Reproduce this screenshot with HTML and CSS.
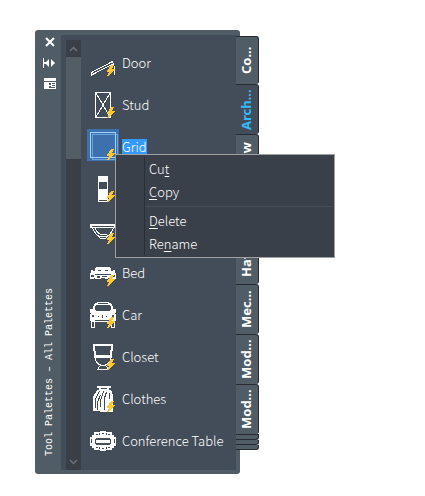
FILE: index.html
```html
<!DOCTYPE html>
<html lang="en">
<head>
    <meta charset="UTF-8">
    <meta name="viewport" content="width=device-width, initial-scale=1.0">
    <title>Tool Palettes</title>
    <link rel="stylesheet" href="styles.css">
</head>
<body>
    <!-- Shared flash mark for every tool -->
    <svg class="defs" aria-hidden="true">
        <symbol id="bolt" viewBox="0 0 8 11">
            <path fill="#ffc832" d="M4 0h3L5 4h3L7 6 1 11H0l2-4H0V6z"/>
        </symbol>
    </svg>

    <main class="window">
        <section class="palette">
            <header class="titlebar">
                <div class="controls">
                    <button class="control" aria-label="Close">
                        <svg width="14" height="12" viewBox="0 0 14 12"><path d="M3 2l8 8M11 2l-8 8" stroke="#fff" stroke-width="2"/></svg>
                    </button>
                    <button class="control" aria-label="Auto-hide">
                        <svg width="14" height="12" viewBox="0 0 14 12"><path d="M-1 1h1v10h-1zM0 5h2l3-3v8L2 7H0zM11 6L7 2v8z" fill="#fff" transform="translate(1)"/></svg>
                    </button>
                    <button class="control" aria-label="Properties">
                        <svg width="14" height="12" viewBox="0 0 14 12" shape-rendering="crispEdges"><path d="M1 0h12v11H1z" fill="#fff"/><path d="M1 3h12v1H1zM6 5h2v2H6zM9 5h3v1H9zM9 7h3v1H9zM6 9h6v1H6zM6 8h2v1H6z" fill="#505c66"/></svg>
                    </button>
                </div>
                <h1 class="title">Tool Palettes – All Palettes</h1>
            </header>

            <div class="content">
                <div class="scrollbar">
                    <button class="arrow" aria-label="Scroll up">
                        <svg width="9" height="6" viewBox="0 0 9 6"><path d="M1 5l3.500-3.500L8 5" fill="none" stroke="#69727d" stroke-width="1.500"/></svg>
                    </button>
                    <div class="thumb"></div>
                    <button class="arrow arrow-down" aria-label="Scroll down">
                        <svg width="9" height="6" viewBox="0 0 9 6"><path d="M1 1l3.500 3.500L8 1" fill="none" stroke="#69727d" stroke-width="1.500"/></svg>
                    </button>
                </div>

                <ul class="tools">
                    <li class="tool">
                        <svg class="icon" viewBox="0 0 32 32" shape-rendering="crispEdges">
                            <path d="M4.500 27.500L25.500 16.500M4.500 30L26 19M4.500 27v3.500M25.500 16.500l1.500 4 .500 10" fill="none" stroke="#fff"/>
                            <use href="#bolt" x="20" y="20" width="8" height="11"/>
                        </svg>
                        <span class="name">Door</span>
                    </li>
                    <li class="tool">
                        <svg class="icon" viewBox="0 0 32 32" shape-rendering="crispEdges">
                            <path d="M8.500 5.500h15v25h-15zM9 6l14 24M23 6L9 30" fill="none" stroke="#fff"/>
                            <use href="#bolt" x="20" y="20" width="8" height="11"/>
                        </svg>
                        <span class="name">Stud</span>
                    </li>
                    <li class="tool selected">
                        <svg class="icon" viewBox="0 0 32 32" shape-rendering="crispEdges">
                            <path d="M5.500 5.500h25v25h-25z" fill="none" stroke="#6aa5e0"/>
                            <path d="M3.500 3.500h25v25h-25z" fill="none" stroke="#a4d2ff"/>
                            <use href="#bolt" x="20" y="20" width="8" height="11"/>
                        </svg>
                        <span class="name">Grid</span>
                    </li>
                    <li class="tool" aria-label="Refrigerator">
                        <svg class="icon" viewBox="0 0 32 32" shape-rendering="crispEdges">
                            <path d="M11 5h10v26H11z" fill="#fff"/>
                            <path d="M12 11h8v7h-8zM12 29h8v1h-8z" fill="#434d59"/>
                            <use href="#bolt" x="20" y="20" width="8" height="11"/>
                        </svg>
                    </li>
                    <li class="tool" aria-label="Basin">
                        <svg class="icon" viewBox="0 0 32 32" shape-rendering="crispEdges">
                            <path d="M3 11h26v4H3z" fill="#fff"/>
                            <path d="M5 13h22v1H5z" fill="#434d59"/>
                            <path d="M5.500 14c1 5 3 7 6 9h9c3-2 5-4 6-9M8 14c1 4 3 6 5 7h7M11 23l2 2h6l2-2" fill="none" stroke="#fff"/>
                            <use href="#bolt" x="20" y="20" width="8" height="11"/>
                        </svg>
                    </li>
                    <li class="tool">
                        <svg class="icon" viewBox="0 0 32 32" shape-rendering="crispEdges">
                            <path d="M9 12h14v1h1v3h2v-1h2v3h1v6h-4v-1h-4v1h-3v-1h-4v1H8v-1H7v1H3v-6h1v-3h2v1h2v-3h1z" fill="#fff"/>
                            <path d="M11 15h3v1h-3zM18 15h3v1h-3zM4 20h3v2H4zM25 20h3v2h-3zM8 19h16v1H8zM10 21h3v2h-3zM15 21h5v1h-5z" fill="#434d59"/>
                            <use href="#bolt" x="20" y="20" width="8" height="11"/>
                        </svg>
                        <span class="name">Bed</span>
                    </li>
                    <li class="tool">
                        <svg class="icon" viewBox="0 0 32 32" shape-rendering="crispEdges">
                            <path d="M10 5h12v1h2v1h1v2h1v3h3v4h-1v1h1v7h-1v7h-4v-6H8v6H4v-7H3v-7h1v-1H3v-4h3V9h1V7h1V6h2z" fill="#fff"/>
                            <path d="M11 6h10v1H11zM9 8h14v1h1v4l-2 1H10l-2-1V9h1zM5 18h2v2H5zM25 18h2v2h-2zM11 19h1v1h-1zM15 18h1v3h-1zM19 19h1v1h-1zM5 25h2v5H5zM25 25h2v5h-2zM8 23h16v1H8z" fill="#434d59"/>
                            <use href="#bolt" x="20" y="20" width="8" height="11"/>
                        </svg>
                        <span class="name">Car</span>
                    </li>
                    <li class="tool">
                        <svg class="icon" viewBox="0 0 32 32" shape-rendering="crispEdges">
                            <path d="M6 5h20v2l-1 10v2H7v-2L6 7z" fill="#fff"/>
                            <path d="M8 7h16l-1 9H9z" fill="#434d59"/>
                            <path d="M8.500 19c0 4 2 6 5 7h5c3-1 5-3 5-7M13.500 26l-3 4.500h11l-3-4.500" fill="none" stroke="#fff"/>
                            <use href="#bolt" x="20" y="20" width="8" height="11"/>
                        </svg>
                        <span class="name">Closet</span>
                    </li>
                    <li class="tool">
                        <svg class="icon" viewBox="0 0 32 32" shape-rendering="crispEdges">
                            <path d="M10 5h14v2h-2v2h2l2 5v17H13v-1H6V16l4-7h2V7h-2z" fill="#fff"/>
                            <path d="M12.500 10l-4 8v9M13.500 14l-3 7v8M16.500 10l-3 10v6M19.500 11l-2 6v12M22.500 12v6M14 7.500h6" fill="none" stroke="#434d59"/>
                            <use href="#bolt" x="20" y="20" width="8" height="11"/>
                        </svg>
                        <span class="name">Clothes</span>
                    </li>
                    <li class="tool">
                        <svg class="icon" viewBox="0 0 32 32" shape-rendering="crispEdges">
                            <path d="M13 8h6v1h6v3h2v2h2v9h-2v2h-2v2h-6v1h-6v-1H7v-2H5v-2H3v-9h2v-2h2V9h6z" fill="#fff"/>
                            <path d="M9 15h14v2H9zM9 20h14v2H9zM8 16h1v5H8zM23 16h1v5h-1zM9 11h2v1H9zM15 10h2v1h-2zM21 11h2v1h-2zM9 24h2v1H9zM15 25h2v1h-2zM21 24h2v1h-2zM4 16h1v4H4zM27 16h1v4h-1zM12 10h1v2h-1zM19 10h1v2h-1zM12 24h1v2h-1zM19 24h1v2h-1z" fill="#434d59"/>
                        </svg>
                        <span class="name">Conference Table</span>
                    </li>
                </ul>
            </div>
        </section>

        <nav class="tabs">
            <button class="tab first">Co...</button>
            <button class="tab active">Arch...</button>
            <button class="tab">Draw</button>
            <button class="tab" aria-label="Civil"></button>
            <button class="tab">Hat...</button>
            <button class="tab">Mec...</button>
            <button class="tab">Mod...</button>
            <button class="tab">Mod...</button>
            <button class="more" aria-label="More palettes"><span></span><span></span><span></span></button>
        </nav>

        <div class="menu" role="menu">
            <button class="menu-item" role="menuitem">Cu<u>t</u></button>
            <button class="menu-item" role="menuitem"><u>C</u>opy</button>
            <hr class="separator">
            <button class="menu-item" role="menuitem"><u>D</u>elete</button>
            <button class="menu-item" role="menuitem">Re<u>n</u>ame</button>
        </div>
    </main>
</body>
</html>
```
FILE: styles.css
```css
* {
    box-sizing: border-box;
}

body {
    margin: 0;
    padding: 30px 35px 22px;
    background-color: #fff;
    color: #fff;
    font-family: "Noto Sans CJK SC", "Noto Sans", sans-serif;
    font-size: 13px;
    font-weight: 300;
}

button {
    border: none;
    padding: 0;
    background: none;
    color: inherit;
    font: inherit;
    cursor: pointer;
}

svg {
    display: block;
}

.defs {
    position: absolute;
    width: 0;
    height: 0;
}

/* Palette and its tabs side by side */
.window {
    position: relative;
    display: flex;
    align-items: flex-start;
}

.palette {
    display: flex;
    min-width: 205px;
    padding: 5px 4px 4px 0;
    border-radius: 3px;
    background-color: #505c66;
}

.titlebar {
    display: flex;
    flex-direction: column;
    justify-content: space-between;
    align-items: center;
    width: 26px;
    padding: 1px 0 14px 3px;
}

.controls {
    display: flex;
    flex-direction: column;
    gap: 9px;
}

.title {
    margin: 0;
    font-family: "Liberation Mono", monospace;
    font-size: 10px;
    font-weight: normal;
    line-height: 14px;
    white-space: nowrap;
    writing-mode: vertical-rl;
    transform: rotate(180deg); /* Read from bottom to top */
}

.content {
    display: flex;
    flex: 1;
    padding: 5px 0 0 5px;
    background-color: #434d59;
}

/* Scrollbar */
.scrollbar {
    display: flex;
    flex-direction: column;
    width: 15px;
    background-color: #3a3f47;
}

.arrow {
    display: flex;
    justify-content: center;
    align-items: center;
    height: 17px;
}

.arrow-down {
    margin-top: auto;
}

.thumb {
    height: 102px;
    background-color: #525d66;
}

/* Tool list */
.tools {
    display: flex;
    flex-direction: column;
    gap: 10px;
    margin: 0;
    padding: 5px 8px 15px 6px;
    list-style: none;
}

.tool {
    display: flex;
    align-items: center;
    gap: 3px;
    height: 32px;
}

.icon {
    width: 32px;
    height: 32px;
}

.name {
    line-height: 16px;
    margin-top: 4px;
    white-space: nowrap;
}

.selected .icon {
    background-color: #3b72ae;
}

.selected .name {
    background-color: #3399ff;
}

/* Side tabs */
.tabs {
    display: flex;
    flex-direction: column;
    width: 23px;
    margin: 6px 0 0 -4px;
}

.tab {
    display: flex;
    align-items: center;
    justify-content: center;
    height: 50px;
    padding-left: 3px;
    border: 1px solid #262b31;
    border-width: 0 0 1px 1px;
    border-radius: 3px 0 0 3px;
    background-color: #505c66;
    font-family: "Noto Sans", sans-serif;
    font-weight: bold;
    line-height: 18px;
    white-space: nowrap;
    writing-mode: vertical-rl;
    transform: rotate(180deg);
}

.tab.first {
    height: 48px;
}

.tab.active {
    background-color: #434d59;
    color: #33bbff;
}

.more {
    display: flex;
    flex-direction: column;
    border-top: 1px solid #262b31;
}

.more span {
    width: 23px;
    height: 5px;
    border: 1px solid #262b31;
    border-width: 0 1px 1px 0;
    border-radius: 0 0 3px 0;
    background-color: #505c66;
}

/* Context menu over the selected tool */
.menu {
    position: absolute;
    top: 124px;
    left: 80px;
    width: 220px;
    padding: 2px;
    border: 1px solid #a0a0a0;
    background: linear-gradient(#2a2f36, #2a2f36) 28px 2px / 1px 98px no-repeat #3a4049;
}

.menu-item {
    display: block;
    width: 100%;
    height: 23px;
    padding-left: 31px;
    line-height: 22px;
    text-align: left;
}

.menu-item u {
    text-underline-offset: 2px;
}

.separator {
    height: 1px;
    margin: 3px 0 2px 27px;
    border: none;
    background-color: #454f5b;
}
```
